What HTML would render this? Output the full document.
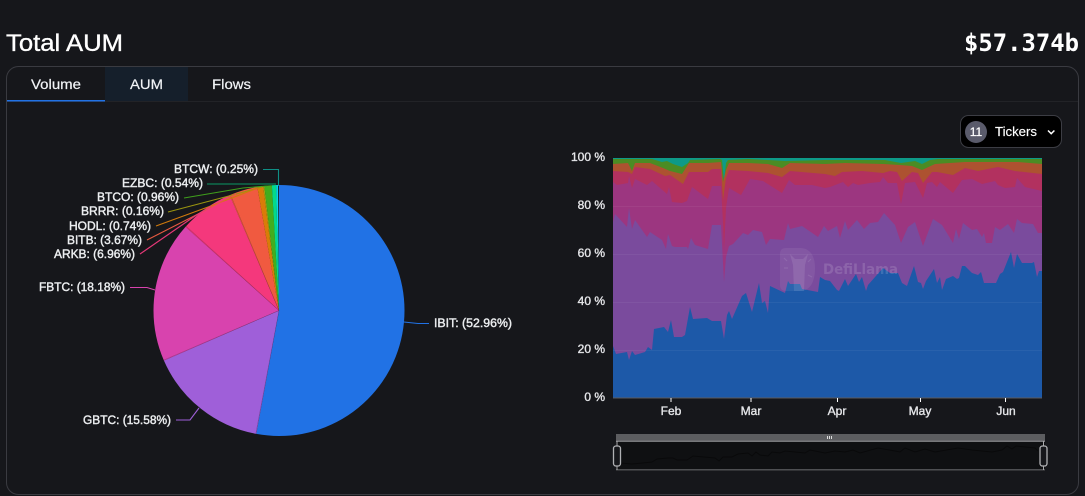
<!DOCTYPE html>
<html><head><meta charset="utf-8"><style>
html,body{margin:0;padding:0;background:#16171b;width:1085px;height:496px;overflow:hidden}
svg{display:block;position:absolute;left:0;top:0}
text{font-family:"Liberation Sans",sans-serif}
</style></head><body>
<svg width="1085" height="496" viewBox="0 0 1085 496" xmlns="http://www.w3.org/2000/svg">
<rect width="1085" height="496" fill="#16171b"/>
<text x="6" y="51" font-size="24" fill="#fff" stroke="#fff" stroke-width=".35" textLength="117" lengthAdjust="spacingAndGlyphs">Total AUM</text>
<text x="964" y="51" font-size="24" font-weight="700" fill="#fff" style='font-family:"DejaVu Sans Mono",monospace' textLength="115" lengthAdjust="spacingAndGlyphs">$57.374b</text>
<rect x="6.5" y="66.5" width="1072" height="428" rx="12" fill="#16171b" stroke="#3a3b41"/>
<rect x="7" y="101" width="1071" height="1" fill="#222327"/>
<rect x="105" y="67" width="83" height="34" fill="#151f2b"/>
<rect x="7" y="100" width="98" height="1.500" fill="#2172e5"/>
<g fill="#f2f4f7" stroke="#f2f4f7" stroke-width=".2" font-size="14">
<text x="31" y="89" textLength="50" lengthAdjust="spacingAndGlyphs">Volume</text>
<text x="130" y="89" textLength="33" lengthAdjust="spacingAndGlyphs">AUM</text>
<text x="212" y="89" textLength="39" lengthAdjust="spacingAndGlyphs">Flows</text>
</g>

<!-- Tickers button -->
<rect x="960.500" y="115.500" width="101" height="32" rx="8" fill="#000" stroke="#3c3d44"/>
<circle cx="976" cy="132" r="11" fill="#5a5b6b"/>
<text x="976" y="136" font-size="12" fill="#fff" stroke="#fff" stroke-width=".25" text-anchor="middle">11</text>
<text x="995" y="136" font-size="13" fill="#fff" stroke="#fff" stroke-width=".15" textLength="42" lengthAdjust="spacingAndGlyphs">Tickers</text>
<path d="M1048 130.500l3.200 3.200 3.200-3.200" fill="none" stroke="#fff" stroke-width="1.500"/>

<!-- Pie -->
<g transform="translate(279 310.500)">
<g transform="rotate(-90)" fill="none" stroke-width="125.500">
<circle r="62.750" pathLength="100" stroke="#2172e5" stroke-dasharray="52.96 100"/>
<circle r="62.750" pathLength="100" stroke="#9f5fd9" stroke-dasharray="15.58 100" stroke-dashoffset="-52.96"/>
<circle r="62.750" pathLength="100" stroke="#d843ae" stroke-dasharray="18.18 100" stroke-dashoffset="-68.54"/>
<circle r="62.750" pathLength="100" stroke="#f4387c" stroke-dasharray="6.96 100" stroke-dashoffset="-86.72"/>
<circle r="62.750" pathLength="100" stroke="#f05a40" stroke-dasharray="3.67 100" stroke-dashoffset="-93.68"/>
<circle r="62.750" pathLength="100" stroke="#d97c08" stroke-dasharray="0.74 100" stroke-dashoffset="-97.35"/>
<circle r="62.750" pathLength="100" stroke="#a8a010" stroke-dasharray="0.16 100" stroke-dashoffset="-98.09"/>
<circle r="62.750" pathLength="100" stroke="#43ad1e" stroke-dasharray="0.96 100" stroke-dashoffset="-98.25"/>
<circle r="62.750" pathLength="100" stroke="#04d98a" stroke-dasharray="0.54 100" stroke-dashoffset="-99.21"/>
<circle r="62.750" pathLength="100" stroke="#06d6e6" stroke-dasharray="0.25 100" stroke-dashoffset="-99.75"/>
</g>
<g stroke="#16171b" stroke-opacity=".3" stroke-width=".5">
<line y2="-125.500" transform="rotate(190.66)"/>
<line y2="-125.500" transform="rotate(246.74)"/>
<line y2="-125.500" transform="rotate(312.19)"/>
<line y2="-125.500" transform="rotate(337.25)"/>
</g>
</g>
<!-- Leaders -->
<g fill="none" stroke-width="1.100">
<path d="M263 169.500H278.500V186" stroke="#0f8f86"/>
<path d="M207 184H276" stroke="#0b9a66"/>
<path d="M184 198L243 188L267 186" stroke="#3f9f1c"/>
<path d="M168 212L225 197L262 187" stroke="#9a9410"/>
<path d="M156 226L208 207L258 188" stroke="#d07a0c"/>
<path d="M147 240L200 213L236 194" stroke="#e65a40"/>
<path d="M140 254L195 216L211 206" stroke="#e63878"/>
<path d="M130 287.500H147L155 290" stroke="#d843ae"/>
<path d="M176 420H190L199 408" stroke="#9f5fd9"/>
<path d="M404 322L418 323.500H429" stroke="#2172e5"/>
</g>
<g font-size="11.500" fill="#eceef0" stroke="#eceef0" stroke-width=".4">
<text x="174" y="173" textLength="84" lengthAdjust="spacingAndGlyphs">BTCW: (0.25%)</text>
<text x="122" y="187" textLength="81" lengthAdjust="spacingAndGlyphs">EZBC: (0.54%)</text>
<text x="97" y="201" textLength="82" lengthAdjust="spacingAndGlyphs">BTCO: (0.96%)</text>
<text x="81" y="215" textLength="83" lengthAdjust="spacingAndGlyphs">BRRR: (0.16%)</text>
<text x="69" y="230" textLength="82" lengthAdjust="spacingAndGlyphs">HODL: (0.74%)</text>
<text x="67" y="244" textLength="75" lengthAdjust="spacingAndGlyphs">BITB: (3.67%)</text>
<text x="54" y="258" textLength="81" lengthAdjust="spacingAndGlyphs">ARKB: (6.96%)</text>
<text x="39" y="291" textLength="86" lengthAdjust="spacingAndGlyphs">FBTC: (18.18%)</text>
<text x="83" y="424" textLength="88" lengthAdjust="spacingAndGlyphs">GBTC: (15.58%)</text>
<text x="434" y="327" textLength="78" lengthAdjust="spacingAndGlyphs">IBIT: (52.96%)</text>
</g>

<!-- Stacked area -->
<rect x="613" y="158" width="429" height="240" fill="#0d9a88"/>
<!-- green -->
<polygon fill="#4b8c24" points="613,159 652,159 662,162 667,161 673,164 682,167 688,163 690,160 720,159 722,160 724,181 726,163 728,160 748,159 768,160 785,161 825,160 845,160 885,160 901,163 915,161 922,164 930,160 938,159 1042,159 1042,398 613,398"/>
<!-- orange -->
<polygon fill="#ad5230" points="613,164 628,163 632,171 635,163 650,163 663,168 670,171 682,174 689,163 708,163 721,162 723,182 726,170 729,163 748,163 768,164 782,168 790,163 825,164 845,163 883,164 900,165 912,166 922,170 935,164 965,162 998,162 1018,162 1042,164 1042,398 613,398"/>
<!-- red -->
<polygon fill="#b2315f" points="613,171 628,172 632,174 635,167 650,169 665,176 670,175 683,184 689,172 708,172 712,169 721,169 723,200 726,178 729,170 748,171 768,173 782,177 790,171 825,174 835,176 842,172 862,171 883,173 890,171 897,172 902,181 912,172 918,173 923,183 932,172 937,172 953,175 965,168 978,171 998,167 1015,171 1042,174 1042,398 613,398"/>
<!-- magenta -->
<polygon fill="#9c3680" points="613,182 617,185 628,183 629,176 632,188 635,179 647,185 652,181 667,194 669,187 672,202 682,203 687,201 692,187 708,199 712,186 721,186 723,223 724,250 726,208 729,188 741,195 750,179 763,181 782,193 789,180 795,185 812,185 825,188 830,187 843,182 848,187 853,183 858,185 870,183 880,182 883,177 888,183 897,183 901,204 905,183 915,182 923,198 927,183 932,182 937,187 940,182 953,193 962,180 972,179 982,184 995,181 998,185 1005,188 1015,187 1017,178 1025,187 1042,191 1042,398 613,398"/>
<!-- purple -->
<polygon fill="#7a4b9d" points="613,222 615,214 627,227 629,208 632,229 635,220 647,237 650,232 662,240 666,249 668,234 672,246 675,247 687,247 688,249 691,238 695,245 708,249 712,225 721,225 724,282 726,257 729,246 733,244 743,233 748,235 753,230 762,232 766,245 770,239 784,240 788,223 790,229 802,226 818,237 824,226 828,231 837,226 840,238 845,221 848,230 857,220 864,229 870,223 878,222 884,213 895,225 901,243 908,227 915,222 923,246 933,219 942,225 953,243 956,229 959,239 963,223 972,230 977,229 982,237 984,233 986,243 992,243 995,227 1000,230 1008,224 1014,233 1017,219 1022,223 1033,224 1038,233 1042,233 1042,398 613,398"/>
<!-- blue -->
<polygon fill="#1d59a8" points="613,346 616,354 627,352 629,360 632,351 635,355 645,352 648,347 652,350 654,329 664,327 668,332 671,320 674,337 682,337 685,335 690,307 693,319 707,318 712,321 721,321 724,339 727,315 729,311 732,319 742,296 746,293 752,312 759,283 762,303 765,301 768,313 770,286 785,293 788,281 790,284 800,284 802,289 818,292 820,277 825,280 830,281 837,290 839,291 845,279 848,286 856,274 859,282 862,277 866,291 868,285 883,268 890,273 898,273 902,283 907,286 914,266 918,282 921,283 923,289 926,281 934,269 937,283 940,277 942,290 946,279 953,276 957,279 959,278 962,266 965,266 972,273 978,275 981,272 984,283 996,283 1000,274 1003,272 1011,252 1014,268 1017,254 1022,263 1032,263 1034,262 1037,277 1039,271 1042,271 1042,398 613,398"/>
<!-- grid -->
<g stroke="#fff" stroke-opacity=".05">
<line x1="613" x2="1042" y1="350.500" y2="350.500"/>
<line x1="613" x2="1042" y1="302.500" y2="302.500"/>
<line x1="613" x2="1042" y1="254.500" y2="254.500"/>
<line x1="613" x2="1042" y1="206.500" y2="206.500"/>
</g>
<!-- watermark -->
<g fill="#fff">
<path opacity=".07" d="M786 248H800C810 248 815 256 815 268C815 282 810 291 800 291H786C782 291 780 289 780 285V254C780 250 782 248 786 248Z"/>
<path opacity=".1" d="M790 254L795 259H803L808 254L805 265L804 291H794L793 265Z"/>
<g stroke="#fff" stroke-opacity=".1" stroke-width="1.200"><line x1="784" y1="258" x2="787" y2="261"/><line x1="811" y1="259" x2="808" y2="262"/><line x1="784" y1="268" x2="788" y2="268"/><line x1="808" y1="275" x2="812" y2="277"/></g>
</g>
<text x="823" y="274" font-size="14.500" font-weight="700" fill="#fff" fill-opacity=".14" textLength="75" lengthAdjust="spacingAndGlyphs" style='font-family:"DejaVu Sans",sans-serif'>DefiLlama</text>
<!-- axis -->
<rect x="613" y="397.500" width="429" height="1" fill="#5a5a5e"/>
<g stroke="#fff"><line x1="671" x2="671" y1="398" y2="402"/><line x1="751" x2="751" y1="398" y2="402"/><line x1="837.500" x2="837.500" y1="398" y2="402"/><line x1="920.500" x2="920.500" y1="398" y2="402"/><line x1="1005.500" x2="1005.500" y1="398" y2="402"/></g>
<g font-size="12" fill="#e6e7ea" stroke="#e6e7ea" stroke-width=".35" text-anchor="end">
<text x="605" y="161">100 %</text>
<text x="605" y="209">80 %</text>
<text x="605" y="257">60 %</text>
<text x="605" y="305">40 %</text>
<text x="605" y="353">20 %</text>
<text x="605" y="401">0 %</text>
</g>
<g font-size="12" fill="#e6e7ea" stroke="#e6e7ea" stroke-width=".35" text-anchor="middle">
<text x="671" y="415">Feb</text>
<text x="751" y="415">Mar</text>
<text x="837" y="415">Apr</text>
<text x="920" y="415">May</text>
<text x="1006" y="415">Jun</text>
</g>
<!-- slider -->
<rect x="616" y="434" width="429" height="7" fill="#5c5d60"/>
<rect x="616" y="441" width="429" height="29" fill="#0f1012"/>
<rect x="616" y="440.500" width="429" height="1.500" fill="#77787b"/>
<rect x="616" y="469" width="429" height="1.500" fill="#4e4f52"/>
<polyline fill="none" stroke="#000" stroke-opacity=".4" points="620,463 632,464 652,462 657,459 668,458 673,458 677,460 687,460 693,456 715,458 719,461 723,457 732,457 738,454 748,453 752,456 756,452 760,455 768,456 772,452 780,453 785,451 805,453 810,450 825,453 835,451 845,452 853,450 860,453 878,448 895,451 900,452 905,448 915,452 925,449 935,452 958,448 972,450 992,452 1002,450 1007,446 1012,449 1016,446 1035,448 1038,451"/>
<rect x="827" y="436" width="1" height="3" fill="#ddd"/><rect x="829" y="436" width="1" height="3" fill="#ddd"/><rect x="831" y="436" width="1" height="3" fill="#ddd"/>
<g fill="none" stroke="#a8a9ac" stroke-width="1">
<path d="M617 441V446M617 466V470"/><path d="M1043.500 441V446M1043.500 466V470"/>
<rect x="613.500" y="446" width="7" height="20" rx="2.500" fill="#16171b" stroke="#b0b1b4" stroke-width="1.300"/>
<rect x="1040" y="446" width="7" height="20" rx="2.500" fill="#16171b" stroke="#b0b1b4" stroke-width="1.300"/>
</g>
</svg>
</body></html>
